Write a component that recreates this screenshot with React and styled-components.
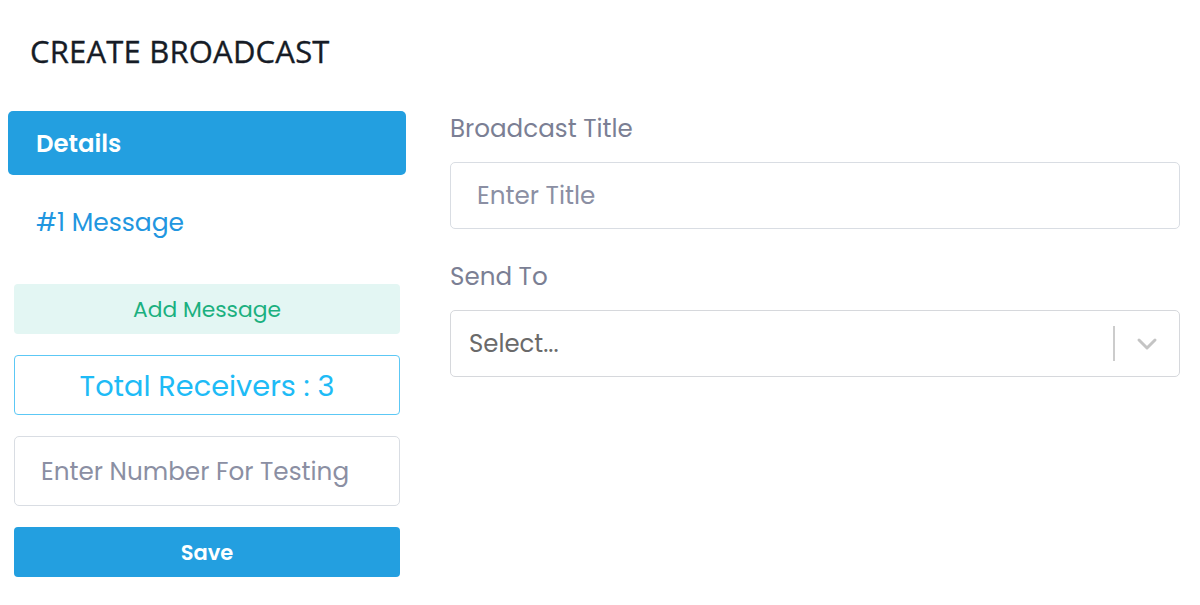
import React from "react";
import styled, { createGlobalStyle } from "styled-components";

const Global = createGlobalStyle`
  html, body { margin: 0; padding: 0; background: #fff; }
  body { font-family: "Poppins", Inter, "Noto Sans", sans-serif; }
  * { box-sizing: border-box; }
`;

const Page = styled.div`
  width: 1200px;
  height: 605px;
  padding: 30px 20px 0 8px;
  overflow: hidden;
`;

const Heading = styled.h1`
  margin: 0 0 0 22px;
  font-family: "Open Sans", sans-serif;
  font-weight: 400;
  font-size: 31px;
  line-height: 42px;
  color: #161c26;
  letter-spacing: 0.2px;
  -webkit-text-stroke: 0.35px #161c26;
`;

const Layout = styled.div`
  display: grid;
  grid-template-columns: 398px 1fr;
  column-gap: 44px;
  margin-top: 39px;
`;

const Sidebar = styled.div`
  display: flex;
  flex-direction: column;
`;

const Tab = styled.div`
  height: 64px;
  display: flex;
  align-items: center;
  padding-left: 28px;
  border-radius: 5px;
  font-size: ${p => (p.$active ? "24.4px" : "25px")};
  font-weight: ${p => (p.$active ? 600 : 400)};
  color: ${p => (p.$active ? "#fff" : "#2196e0")};
  background: ${p => (p.$active ? "#239fe0" : "transparent")};
  margin-bottom: ${p => (p.$active ? "16px" : "0")};
`;

const SideStack = styled.div`
  display: flex;
  flex-direction: column;
  gap: 21px;
  padding: 0 6px;
  margin-top: 29px;
`;

const AddButton = styled.button`
  height: 50px;
  border: none;
  border-radius: 4px;
  background: #e3f6f3;
  color: #1bb07f;
  font-family: inherit;
  font-size: 21.8px;
  font-weight: 400;
`;

const Receivers = styled.div`
  height: 60px;
  border: 1.5px solid #5cc8f5;
  border-radius: 4px;
  display: flex;
  align-items: center;
  justify-content: center;
  color: #1ebbf6;
  font-size: 28.8px;
  font-weight: 400;
  padding-top: 2px;
`;

const TextInput = styled.input`
  height: ${p => p.$h || "70px"};
  width: 100%;
  border: 1.5px solid #d9dde3;
  border-radius: 5px;
  padding: 0 ${p => p.$pad || "26px"};
  font-family: inherit;
  font-size: 24.7px;
  color: #333;
  outline: none;
  &::placeholder { color: #8b8fa3; }
`;

const SaveButton = styled.button`
  height: 50px;
  border: none;
  border-radius: 4px;
  background: #239fe0;
  color: #fff;
  font-family: inherit;
  font-size: 21px;
  font-weight: 600;
`;

const Form = styled.div`
  display: flex;
  flex-direction: column;
  padding-top: 3px;
`;

const Field = styled.div`
  display: flex;
  flex-direction: column;
  gap: 18px;
  margin-bottom: 33px;
`;

const Label = styled.label`
  font-size: 24.6px;
  font-weight: 400;
  color: #7b7f94;
  line-height: 30px;
`;

const SelectBox = styled.div`
  height: 67px;
  border: 1.5px solid #d6d8dc;
  border-radius: 5px;
  display: flex;
  align-items: center;
`;

const SelectValue = styled.div`
  flex: 1;
  padding-left: 18px;
  font-size: 24.4px;
  color: #6a6a6a;
`;

const Separator = styled.span`
  width: 2px;
  height: 35px;
  background: #cccccc;
`;

const Chevron = styled.div`
  width: 64px;
  display: flex;
  justify-content: center;
  color: #c4c4c4;
`;

export default function App() {
  return (
    <Page>
      <Global />
      <Heading>CREATE BROADCAST</Heading>
      <Layout>
        <Sidebar>
          <Tab $active>Details</Tab>
          <Tab>#1 Message</Tab>
          <SideStack>
            <AddButton>Add Message</AddButton>
            <Receivers>Total Receivers : 3</Receivers>
            <TextInput placeholder="Enter Number For Testing" $pad="26px" />
            <SaveButton>Save</SaveButton>
          </SideStack>
        </Sidebar>
        <Form>
          <Field>
            <Label>Broadcast Title</Label>
            <TextInput placeholder="Enter Title" $h="67px" />
          </Field>
          <Field>
            <Label>Send To</Label>
            <SelectBox>
              <SelectValue>Select...</SelectValue>
              <Separator />
              <Chevron>
                <svg width="22" height="14" viewBox="0 0 22 14" fill="none">
                  <path d="M3 3l8 8 8-8" stroke="currentColor" strokeWidth="3" strokeLinecap="round" strokeLinejoin="round" />
                </svg>
              </Chevron>
            </SelectBox>
          </Field>
        </Form>
      </Layout>
    </Page>
  );
}
